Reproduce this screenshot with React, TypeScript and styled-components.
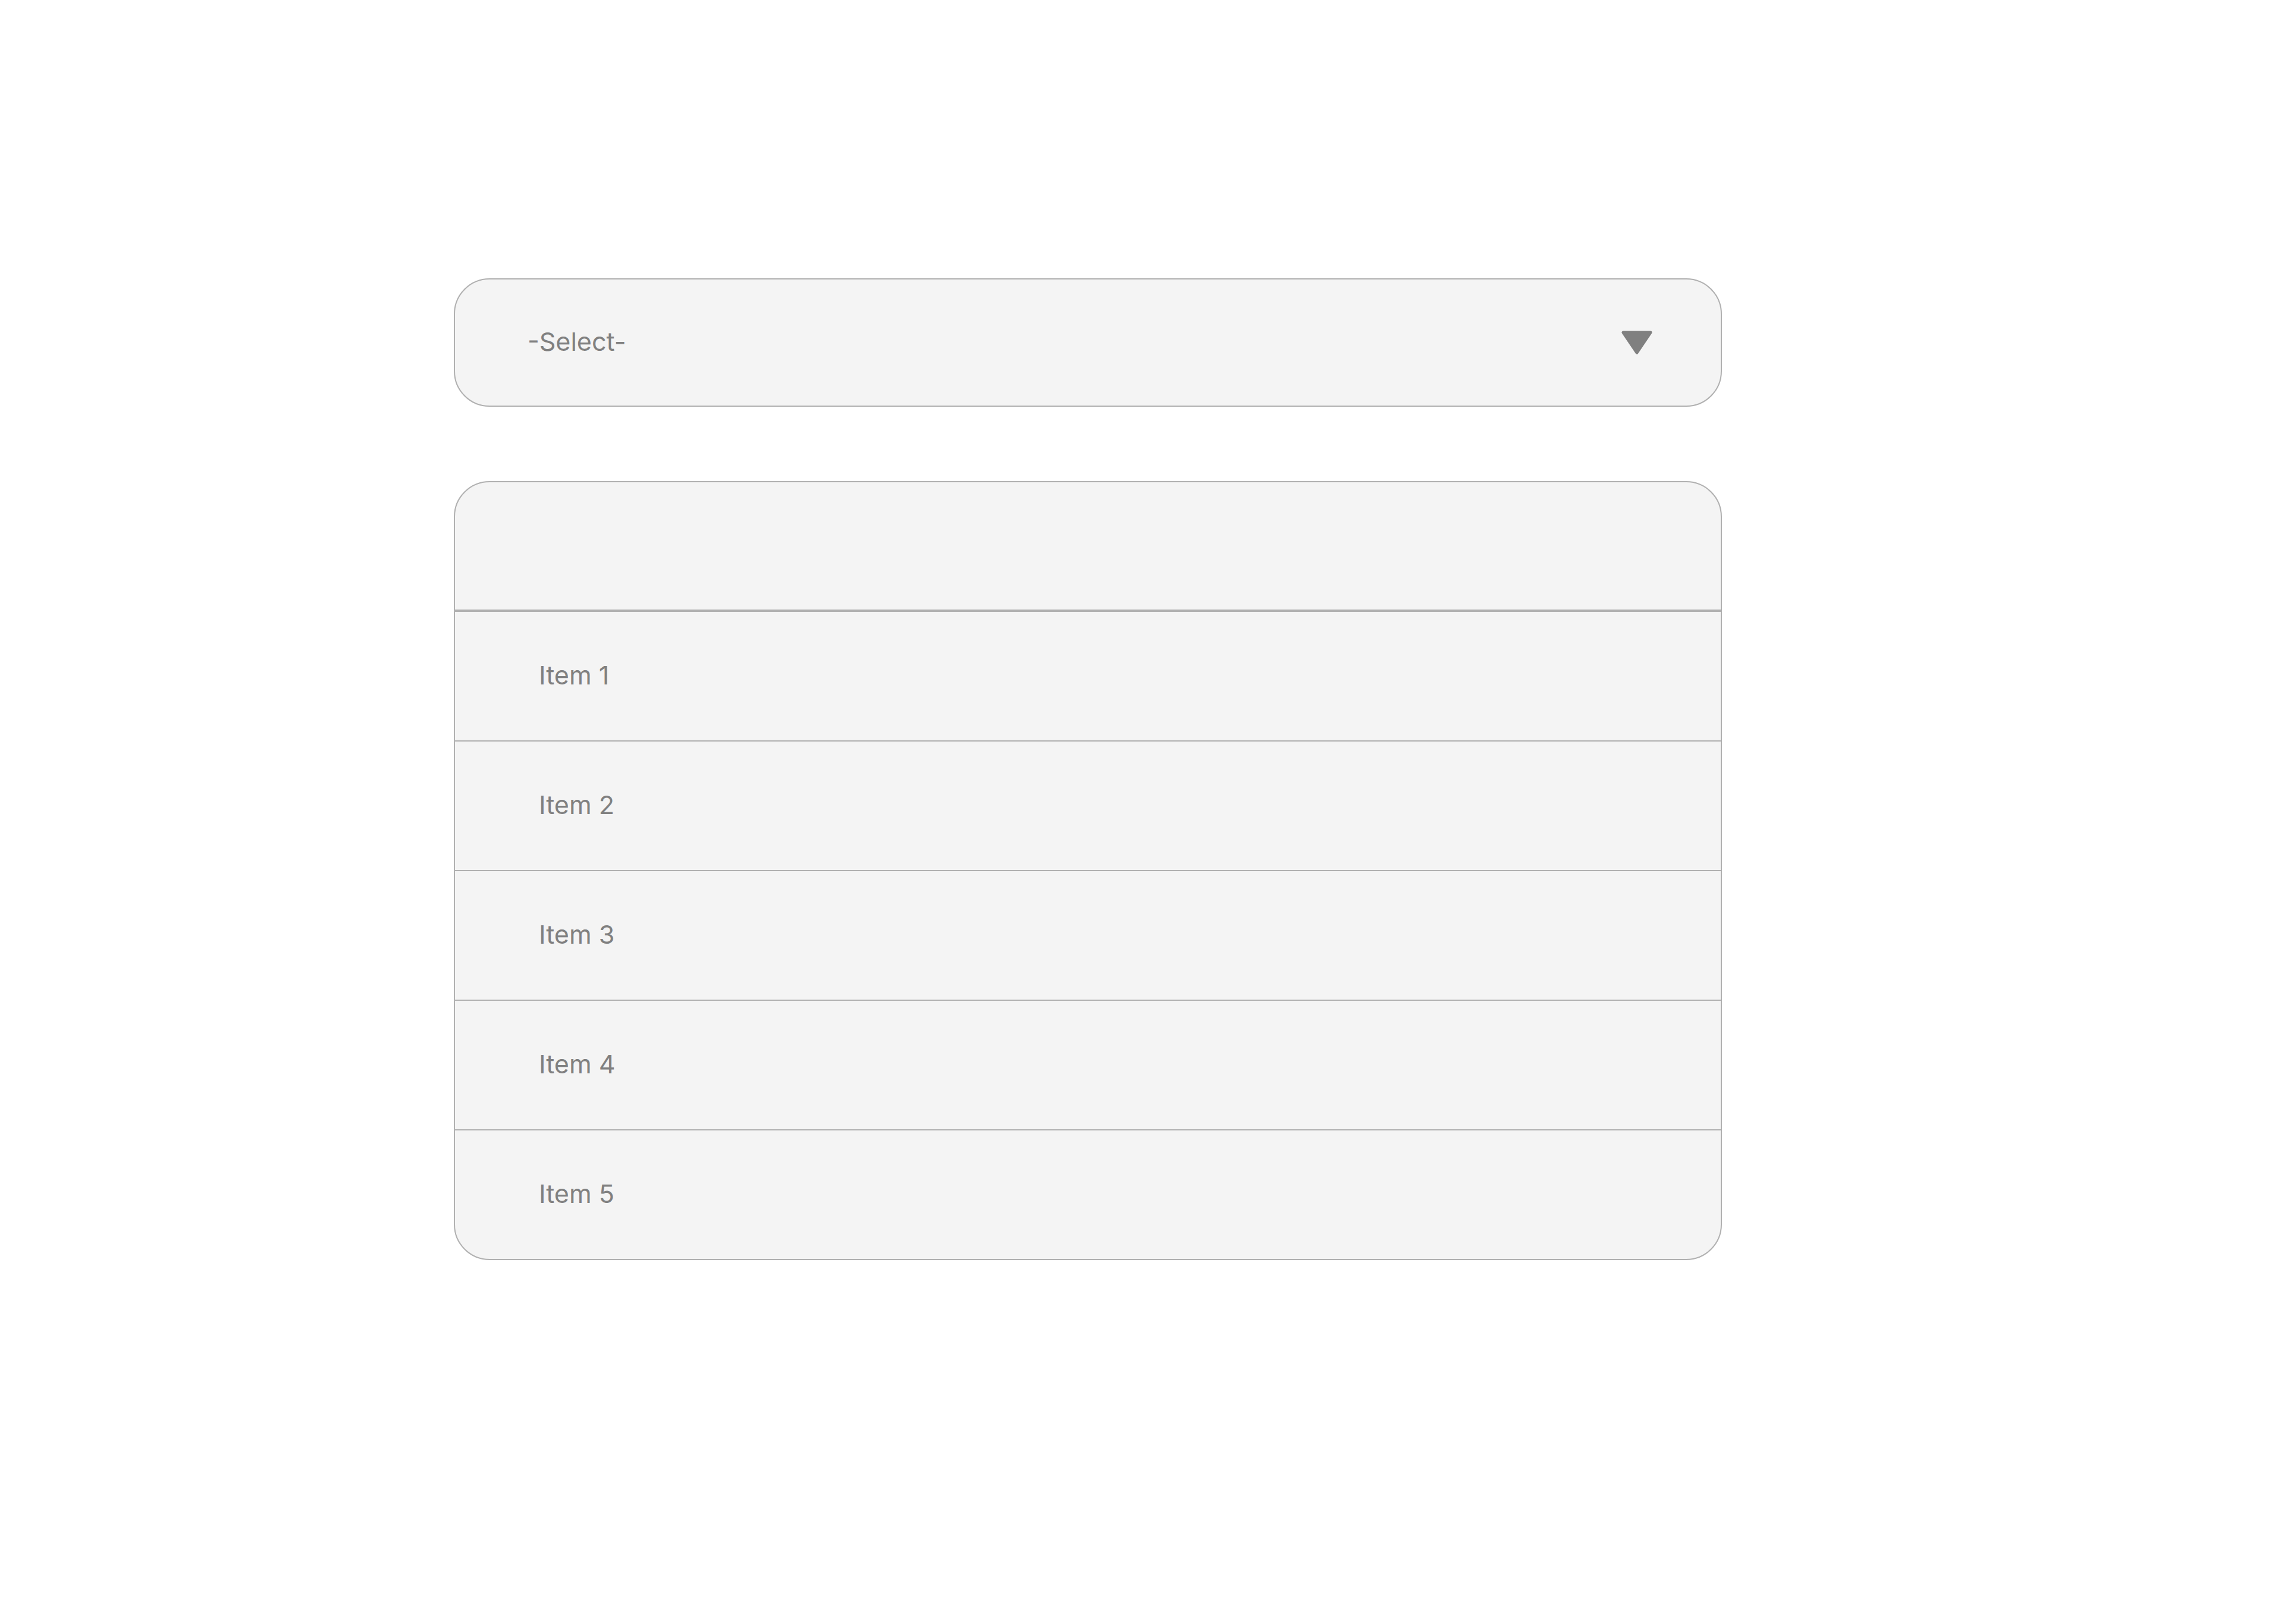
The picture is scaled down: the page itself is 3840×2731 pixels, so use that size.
import styled, { createGlobalStyle } from "styled-components";

const GlobalStyle = createGlobalStyle`
    html, body {
        margin: 0;
        padding: 0;
        background: #ffffff;
        font-family: Inter, 'Noto Sans', 'Liberation Sans', sans-serif;
    }
`;

const Page = styled.main`
    padding: 468px 0 0 763px;
    min-height: 2731px;
    box-sizing: border-box;
`;

const Stack = styled.div`
    display: flex;
    flex-direction: column;
    gap: 125px;
    width: 2132px;
`;

const SelectBox = styled.div`
    box-sizing: border-box;
    height: 216px;
    display: flex;
    align-items: center;
    justify-content: space-between;
    padding: 0 115px 0 122px;
    background: #f4f4f4;
    border: 2px solid #b0b0b0;
    border-radius: 60px;
    cursor: pointer;
`;

const Placeholder = styled.span`
    font-size: 43px;
    color: #808080;
    margin-bottom: 4px;
`;

const List = styled.ul`
    margin: 0;
    padding: 0;
    list-style: none;
    background: #f4f4f4;
    border: 2px solid #b0b0b0;
    border-radius: 60px;
    overflow: hidden;
`;

const Header = styled.li`
    height: 214px;
    border-bottom: 4px solid #b0b0b0;
`;

const Row = styled.li<{ $last?: boolean }>`
    height: 212px;
    display: flex;
    align-items: center;
    padding: 0 0 4px 141px;
    font-size: 43px;
    color: #808080;
    border-bottom: ${p => (p.$last ? "none" : "2px solid #b0b0b0")};
`;

const Caret = () => (
    <svg width="52" height="40" viewBox="0 0 52 40">
        <polygon points="3,3 49,3 26,37" fill="#808080" stroke="#808080" strokeWidth="5" strokeLinejoin="round" />
    </svg>
);

const items = ["Item 1", "Item 2", "Item 3", "Item 4", "Item 5"];

export default function App() {
    return (
        <>
            <GlobalStyle />
            <Page>
                <Stack>
                    <SelectBox>
                        <Placeholder>-Select-</Placeholder>
                        <Caret />
                    </SelectBox>
                    <List>
                        <Header />
                        {items.map((item, i) => (
                            <Row key={item} $last={i === items.length - 1}>{item}</Row>
                        ))}
                    </List>
                </Stack>
            </Page>
        </>
    );
}
